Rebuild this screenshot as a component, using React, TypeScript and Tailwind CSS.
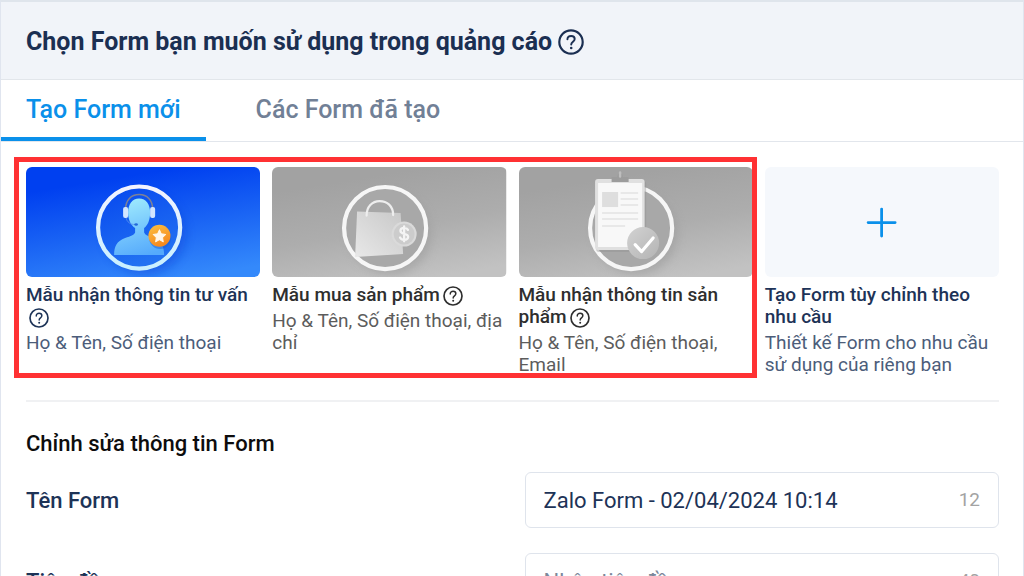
import { useState, type ReactNode } from "react";

type Template = {
  id: string;
  title: string;
  description: string;
  hasHelp: boolean;
  titleClass: string;
  descriptionClass: string;
  art: ReactNode;
};

function HelpIcon({ className }: { className: string }) {
  return (
    <svg viewBox="0 0 24 24" fill="none" stroke="currentColor" strokeLinecap="round" className={className} aria-hidden="true">
      <circle cx="12" cy="12" r="10.8" strokeWidth="2" />
      <path d="M8.700 9.500c0-1.900 1.400-3.100 3.400-3.100s3.300 1.200 3.300 2.900c0 2.400-3.200 2.600-3.200 5" strokeWidth="1.800" />
      <circle cx="12.200" cy="17.600" r="1.200" fill="currentColor" stroke="none" />
    </svg>
  );
}

function ConsultArt() {
  return (
    <svg viewBox="0 0 234 110" className="block h-auto w-full rounded-md" aria-hidden="true">
      <defs>
        <linearGradient id="consult-bg" x1="0.35" y1="0" x2="0.7" y2="1">
          <stop offset="0.1" stopColor="#0040f0" />
          <stop offset="0.55" stopColor="#1a64f4" />
          <stop offset="1" stopColor="#3489fb" />
        </linearGradient>
        <linearGradient id="consult-ring" x1="0" y1="0" x2="0" y2="1">
          <stop offset="0" stopColor="#f2f3ff" />
          <stop offset="1" stopColor="#c8efff" />
        </linearGradient>
        <linearGradient id="consult-inner" x1="0" y1="0" x2="0.4" y2="1">
          <stop offset="0" stopColor="#0646ee" />
          <stop offset="1" stopColor="#2272f2" />
        </linearGradient>
        <linearGradient id="consult-body" gradientUnits="userSpaceOnUse" x1="104" y1="32" x2="122" y2="88">
          <stop offset="0" stopColor="#9eeafd" />
          <stop offset="0.5" stopColor="#78c8fd" />
          <stop offset="1" stopColor="#55aafc" />
        </linearGradient>
        <linearGradient id="consult-badge" x1="0" y1="0" x2="0.4" y2="1">
          <stop offset="0" stopColor="#fcc142" />
          <stop offset="1" stopColor="#f58a1f" />
        </linearGradient>
        <filter id="consult-shadow" x="-30%" y="-30%" width="160%" height="160%">
          <feGaussianBlur stdDeviation="5" />
        </filter>
      </defs>
      <rect width="234" height="110" fill="url(#consult-bg)" />
      <circle cx="119" cy="67" r="41" fill="#0b44d8" opacity="0.45" filter="url(#consult-shadow)" />
      <circle cx="113" cy="60.500" r="41" fill="url(#consult-inner)" />
      <circle cx="113" cy="60.500" r="41" fill="none" stroke="url(#consult-ring)" strokeWidth="4.200" />
      <path d="M99.500 42c0-9 5.500-14.500 13.500-14.500s13.500 5.500 13.500 14.500" fill="none" stroke="#7d8196" strokeWidth="1.500" />
      <path
        d="M88 88c0-9 3-14 11-17 6-2 9-3 10-5.500v-4.500c-4-2.500-7-8-7-15.500 0-8 4-14 11-14s11 6 11 14c0 7.500-2.500 13-6 15.500v4.500c1 2.500 4 3.500 9 5.500 8 3 11 8 11 17z"
        fill="url(#consult-body)"
      />
      <rect x="97" y="40" width="5" height="11" rx="2" fill="#d3e6ff" />
      <rect x="124" y="40" width="5" height="11" rx="2" fill="#d3e6ff" />
      <path d="M100 51c1 4 4 6.500 9 6.500" fill="none" stroke="#5a94ee" strokeWidth="0.800" />
      <ellipse cx="110" cy="57.500" rx="1.800" ry="1.300" fill="#2468d8" />
      <circle cx="134" cy="71" r="11" fill="#1a5fd8" opacity="0.5" />
      <circle cx="133.300" cy="68.700" r="11" fill="url(#consult-badge)" />
      <path d="M133.300 62.800l1.900 4 4.300.6-3.100 3 .7 4.300-3.800-2.100-3.800 2.100.7-4.300-3.100-3 4.300-.6z" fill="#fff6e8" stroke="#fff6e8" strokeLinejoin="round" />
    </svg>
  );
}

function ProductArt() {
  return (
    <svg viewBox="0 0 234 110" className="block h-auto w-full rounded-md" aria-hidden="true">
      <defs>
        <linearGradient id="product-bg" x1="0.35" y1="0" x2="0.7" y2="1">
          <stop offset="0.1" stopColor="#a2a2a2" />
          <stop offset="0.55" stopColor="#adadad" />
          <stop offset="1" stopColor="#c2c2c2" />
        </linearGradient>
        <linearGradient id="product-bag" x1="1" y1="0" x2="0" y2="1">
          <stop offset="0" stopColor="#c8c8c8" />
          <stop offset="1" stopColor="#e8e8e8" />
        </linearGradient>
        <filter id="product-shadow" x="-30%" y="-30%" width="160%" height="160%">
          <feGaussianBlur stdDeviation="5" />
        </filter>
      </defs>
      <rect width="234" height="110" fill="url(#product-bg)" />
      <circle cx="118" cy="67" r="41" fill="#969696" opacity="0.5" filter="url(#product-shadow)" />
      <circle cx="113" cy="61" r="41" fill="#a8a8a8" />
      <circle cx="113" cy="61" r="41" fill="none" stroke="#f6f6f6" strokeWidth="4.200" />
      <path d="M85 44.500l43.500 1.500 2.500 41-48 3z" fill="url(#product-bag)" />
      <path d="M94.500 48.500c0-9 5.500-14.500 13-14.500s13.500 5 13.500 14" fill="none" stroke="#eeeeee" strokeWidth="2.200" strokeLinecap="round" />
      <circle cx="132" cy="67" r="12.500" fill="#dadada" />
      <circle cx="132" cy="67" r="10.500" fill="#cccccc" />
      <path
        d="M135.800 62.800c-.7-1.300-2-1.900-3.700-1.900-2.300 0-3.800 1.100-3.800 2.800 0 4.200 7.700 1.800 7.700 6 0 1.900-1.600 3-4 3-1.900 0-3.400-.8-4.100-2.200M132 59.300v15"
        fill="none"
        stroke="#f4f4f4"
        strokeWidth="2.300"
        strokeLinecap="round"
      />
    </svg>
  );
}

function ClipboardArt() {
  return (
    <svg viewBox="0 0 234 110" className="block h-auto w-full rounded-md" aria-hidden="true">
      <defs>
        <linearGradient id="clip-bg" x1="0.35" y1="0" x2="0.7" y2="1">
          <stop offset="0.1" stopColor="#a2a2a2" />
          <stop offset="0.55" stopColor="#adadad" />
          <stop offset="1" stopColor="#c2c2c2" />
        </linearGradient>
        <linearGradient id="clip-badge" x1="0" y1="0" x2="1" y2="1">
          <stop offset="0" stopColor="#d2d2d2" />
          <stop offset="1" stopColor="#b4b4b4" />
        </linearGradient>
        <filter id="clip-shadow" x="-30%" y="-30%" width="160%" height="160%">
          <feGaussianBlur stdDeviation="5" />
        </filter>
      </defs>
      <rect width="234" height="110" fill="url(#clip-bg)" />
      <circle cx="117" cy="67" r="41" fill="#969696" opacity="0.5" filter="url(#clip-shadow)" />
      <circle cx="112" cy="61" r="41" fill="#a8a8a8" />
      <circle cx="112" cy="61" r="41" fill="none" stroke="#f6f6f6" strokeWidth="4.200" />
      <rect x="77" y="14" width="50" height="71" rx="3" fill="#8f8f8f" opacity="0.4" />
      <rect x="76" y="12" width="49.500" height="71" rx="3" fill="#e0e0e0" />
      <path d="M79 16h44v50l-12 14H79z" fill="#f8f8f8" />
      <path d="M92.500 10h5.500l1-3h4l1 3h5.500v5h-17z" fill="#9c9c9c" />
      <path d="M101 5.500v4" stroke="#bebebe" strokeWidth="2.400" strokeLinecap="round" />
      <rect x="83" y="25" width="16" height="15" fill="#dedede" />
      <path d="M101.500 26H119M101.500 32H119M101.500 38H119M83 46h36M83 52h36M83 59h23" fill="none" stroke="#e2e2e2" strokeWidth="1.400" />
      <circle cx="124" cy="76" r="16" fill="url(#clip-badge)" />
      <path d="M116 77.500l6.500 7L134 71" fill="none" stroke="#ffffff" strokeWidth="3.200" strokeLinecap="round" strokeLinejoin="round" />
    </svg>
  );
}

function CustomArt() {
  return (
    <svg viewBox="0 0 234 110" className="block h-auto w-full rounded-md" aria-hidden="true">
      <rect width="234" height="110" fill="#f5f8fc" />
      <path d="M116.500 42v27M103 55.500h27" fill="none" stroke="#0a90ea" strokeWidth="2.800" strokeLinecap="round" />
    </svg>
  );
}

const templates: Template[] = [
  {
    id: "consult",
    title: "Mẫu nhận thông tin tư vấn",
    description: "Họ & Tên, Số điện thoại",
    hasHelp: true,
    titleClass: "text-[#1d3357]",
    descriptionClass: "text-[#4c5d7a]",
    art: <ConsultArt />,
  },
  {
    id: "product",
    title: "Mẫu mua sản phẩm",
    description: "Họ & Tên, Số điện thoại, địa chỉ",
    hasHelp: true,
    titleClass: "text-[#2e2e2e]",
    descriptionClass: "text-[#5c5c5c]",
    art: <ProductArt />,
  },
  {
    id: "product-info",
    title: "Mẫu nhận thông tin sản phẩm",
    description: "Họ & Tên, Số điện thoại, Email",
    hasHelp: true,
    titleClass: "text-[#2e2e2e]",
    descriptionClass: "text-[#5c5c5c]",
    art: <ClipboardArt />,
  },
  {
    id: "custom",
    title: "Tạo Form tùy chỉnh theo nhu cầu",
    description: "Thiết kế Form cho nhu cầu sử dụng của riêng bạn",
    hasHelp: false,
    titleClass: "text-[#1d3357]",
    descriptionClass: "text-[#4c5d7a]",
    art: <CustomArt />,
  },
];

function TemplateCard({ template }: { template: Template }) {
  return (
    <button type="button" className="flex flex-col text-left">
      {template.art}
      <span className={`mt-[7px] text-[19px] leading-[22px] font-medium ${template.titleClass}`}>
        {template.title}
        {template.hasHelp && <HelpIcon className="ml-[3px] inline-block size-5 align-text-bottom" />}
      </span>
      <span className={`mt-1 text-[19px] leading-[22px] ${template.descriptionClass}`}>{template.description}</span>
    </button>
  );
}

type FieldProps = {
  id: string;
  label: string;
  value: string;
  placeholder?: string;
  remaining: number;
  onChange: (value: string) => void;
};

function Field({ id, label, value, placeholder, remaining, onChange }: FieldProps) {
  return (
    <div className="grid grid-cols-2 items-center gap-6">
      <label htmlFor={id} className="text-[22px] font-medium text-[#1d3357]">
        {label}
      </label>
      <div className="flex h-14 items-center rounded-md border border-[#dfe4ec] bg-white px-[18px]">
        <input
          id={id}
          type="text"
          value={value}
          placeholder={placeholder}
          onChange={(event) => onChange(event.target.value)}
          className="min-w-0 flex-1 text-[22px] text-[#1d3357] outline-none placeholder:text-[#7c889b]"
        />
        <span className="text-[19px] text-[#a3a3a3]">{remaining}</span>
      </div>
    </div>
  );
}

export default function App() {
  const [tab, setTab] = useState("new");
  const [name, setName] = useState("Zalo Form - 02/04/2024 10:14");
  const [heading, setHeading] = useState("");

  return (
    <main className="min-h-screen border-x border-t-2 border-x-[#e0e5ef] border-t-[#dfe5ec] bg-white font-['Roboto',sans-serif]">
      <header className="flex items-center gap-1.5 border-b border-[#e2e6eb] bg-[#f1f4f9] px-[25px] pt-5 pb-[17px] text-[#1b2f52]">
        <h1 className="text-[25px] leading-10 font-bold">Chọn Form bạn muốn sử dụng trong quảng cáo</h1>
        <HelpIcon className="size-[26px]" />
      </header>

      <div role="tablist" className="flex border-b border-[#e2e6ec] text-[25px] leading-8 font-medium">
        <button
          type="button"
          role="tab"
          aria-selected={tab === "new"}
          onClick={() => setTab("new")}
          className={`border-b-4 px-[25px] pt-3.5 pb-[11px] ${tab === "new" ? "border-[#0a90ea] text-[#0a90ea]" : "border-transparent text-[#718096]"}`}
        >
          Tạo Form mới
        </button>
        <button
          type="button"
          role="tab"
          aria-selected={tab === "created"}
          onClick={() => setTab("created")}
          className={`border-b-4 px-[50px] pt-3.5 pb-[11px] ${tab === "created" ? "border-[#0a90ea] text-[#0a90ea]" : "border-transparent text-[#718096]"}`}
        >
          Các Form đã tạo
        </button>
      </div>

      <div className="pr-6 pl-[25px]">
        <section className="relative mt-[25px] grid grid-cols-4 items-start gap-3">
          {templates.map((template) => (
            <TemplateCard key={template.id} template={template} />
          ))}
          <div className="pointer-events-none absolute -top-2.5 -right-1 -bottom-0.5 -left-3 col-start-1 col-end-4 border-[5px] border-[#ff3133]" />
        </section>

        <section className="mt-6 border-t-2 border-[#f0f1f3] pt-[26px]">
          <h2 className="mb-3 text-[22px] leading-8 font-medium text-[#0d0d0d]">Chỉnh sửa thông tin Form</h2>
          <div className="space-y-[25px]">
            <Field id="form-name" label="Tên Form" value={name} remaining={12} onChange={setName} />
            <Field
              id="form-heading"
              label="Tiêu đề"
              value={heading}
              placeholder="Nhập tiêu đề"
              remaining={40}
              onChange={setHeading}
            />
          </div>
        </section>
      </div>
    </main>
  );
}
